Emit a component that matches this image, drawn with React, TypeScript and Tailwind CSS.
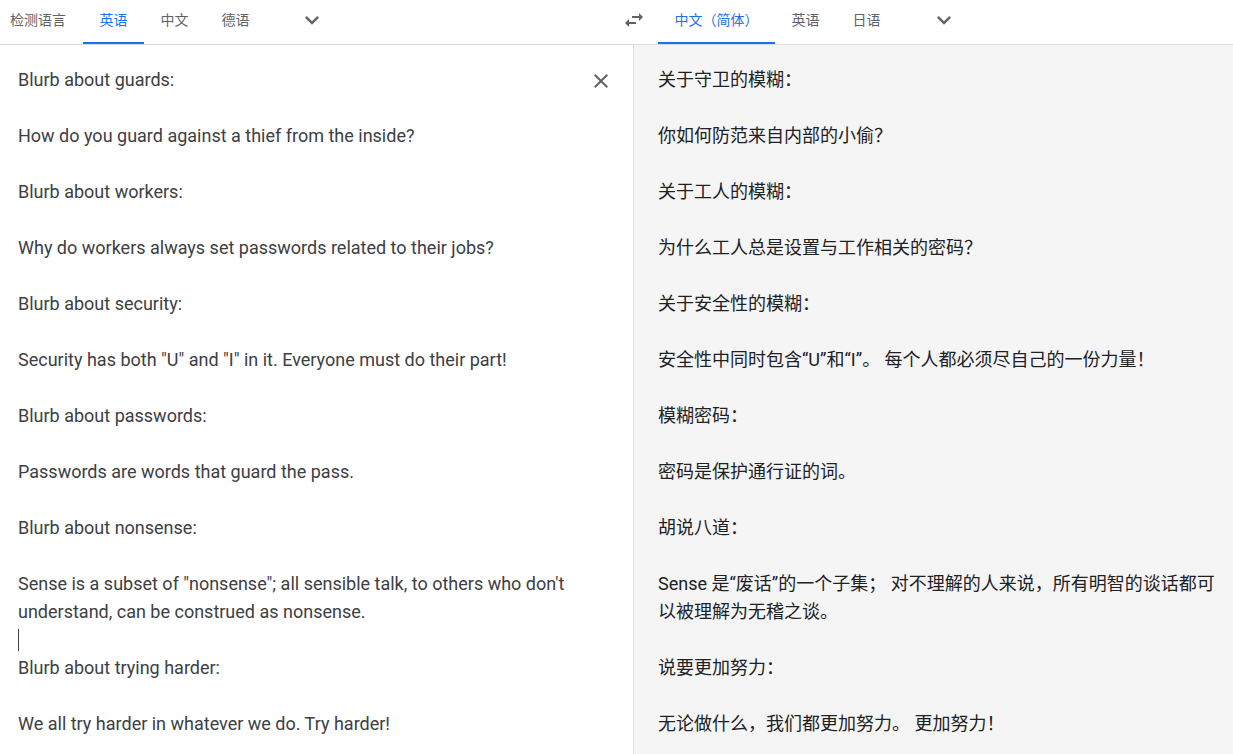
import { useState } from "react";

const sourceLines = [
  "Blurb about guards:",
  "",
  "How do you guard against a thief from the inside?",
  "",
  "Blurb about workers:",
  "",
  "Why do workers always set passwords related to their jobs?",
  "",
  "Blurb about security:",
  "",
  'Security has both "U" and "I" in it. Everyone must do their part!',
  "",
  "Blurb about passwords:",
  "",
  "Passwords are words that guard the pass.",
  "",
  "Blurb about nonsense:",
  "",
  'Sense is a subset of "nonsense"; all sensible talk, to others who don\'t understand, can be construed as nonsense.',
  "|",
  "Blurb about trying harder:",
  "",
  "We all try harder in whatever we do. Try harder!",
];

const targetLines = [
  "关于守卫的模糊：",
  "",
  "你如何防范来自内部的小偷？",
  "",
  "关于工人的模糊：",
  "",
  "为什么工人总是设置与工作相关的密码？",
  "",
  "关于安全性的模糊：",
  "",
  "安全性中同时包含“U”和“I”。 每个人都必须尽自己的一份力量！",
  "",
  "模糊密码：",
  "",
  "密码是保护通行证的词。",
  "",
  "胡说八道：",
  "",
  "Sense 是“废话”的一个子集； 对不理解的人来说，所有明智的谈话都可以被理解为无稽之谈。",
  "",
  "说要更加努力：",
  "",
  "无论做什么，我们都更加努力。 更加努力！",
];

const Chevron = () => (
  <svg viewBox="0 0 24 24" className="h-7 w-7 fill-[#5f6368]">
    <path d="M16.59 8.59L12 13.17 7.41 8.59 6 10l6 6 6-6z" />
  </svg>
);

type TabProps = { label: string; active?: boolean; first?: boolean };

const Tab = ({ label, active, first }: TabProps) => (
  <button
    className={
      active
        ? "relative h-11 px-[16.5px] pb-1 text-sm text-[#1a73e8] after:absolute after:bottom-0 after:left-0 after:right-0 after:h-[2px] after:bg-[#1a73e8]"
        : first
          ? "h-11 pl-[10px] pr-[17px] pb-1 text-sm text-[#5f6368]"
          : "h-11 px-[16.5px] pb-1 text-sm text-[#5f6368]"
    }
  >
    {label}
  </button>
);

const App = () => {
  const [text] = useState(sourceLines);

  return (
    <div
      className="flex h-[754px] w-[1233px] flex-col overflow-hidden bg-white"
      style={{ fontFamily: 'Roboto, "Noto Sans CJK SC", sans-serif' }}
    >
      <header className="flex h-[45px] shrink-0 border-b border-[#dadce0]">
        <div className="flex w-[610px] items-center">
          <Tab label="检测语言" first />
          <Tab label="英语" active />
          <Tab label="中文" />
          <Tab label="德语" />
          <div className="ml-[32px] flex h-11 items-center pb-1">
            <Chevron />
          </div>
        </div>
        <div className="flex w-[48px] items-center justify-center pb-1">
          <svg viewBox="0 0 24 24" className="h-6 w-6 fill-[#5f6368]">
            <path d="M6.99 11L3 15l3.99 4v-3H14v-2H6.99v-3zM21 9l-3.99-4v3H10v2h7.01v3L21 9z" />
          </svg>
        </div>
        <div className="flex flex-1 items-center">
          <Tab label="中文（简体）" active />
          <Tab label="英语" />
          <Tab label="日语" />
          <div className="ml-[33px] flex h-11 items-center pb-1">
            <Chevron />
          </div>
        </div>
      </header>

      <main className="flex flex-1">
        <section className="flex w-[634px] border-r border-[#dadce0] pt-[21px] pl-[18px]">
          <div className="w-[560px] text-[18px] leading-7 text-[#3c4043]">
            {text.map((line, i) =>
              line === "|" ? (
                <div key={i} className="flex h-7 items-center">
                  <span className="h-[22px] w-px bg-[#3c4043]" />
                </div>
              ) : (
                <div key={i} className="min-h-7">
                  {line}
                </div>
              ),
            )}
          </div>
          <div className="mt-px ml-[3px] flex h-7 w-10 items-center justify-center">
            <svg viewBox="0 0 24 24" className="h-6 w-6 fill-[#5f6368]">
              <path d="M19 6.41L17.59 5 12 10.59 6.41 5 5 6.41 10.59 12 5 17.59 6.41 19 12 13.41 17.59 19 19 17.59 13.41 12z" />
            </svg>
          </div>
        </section>
        <section className="flex-1 bg-[#f5f5f5] pt-[21px] pl-6 pr-[10px]">
          <div className="text-[18px] leading-7 text-[#202124]">
            {targetLines.map((line, i) => (
              <div key={i} className="min-h-7">
                {line}
              </div>
            ))}
          </div>
        </section>
      </main>
    </div>
  );
};

export default App;
